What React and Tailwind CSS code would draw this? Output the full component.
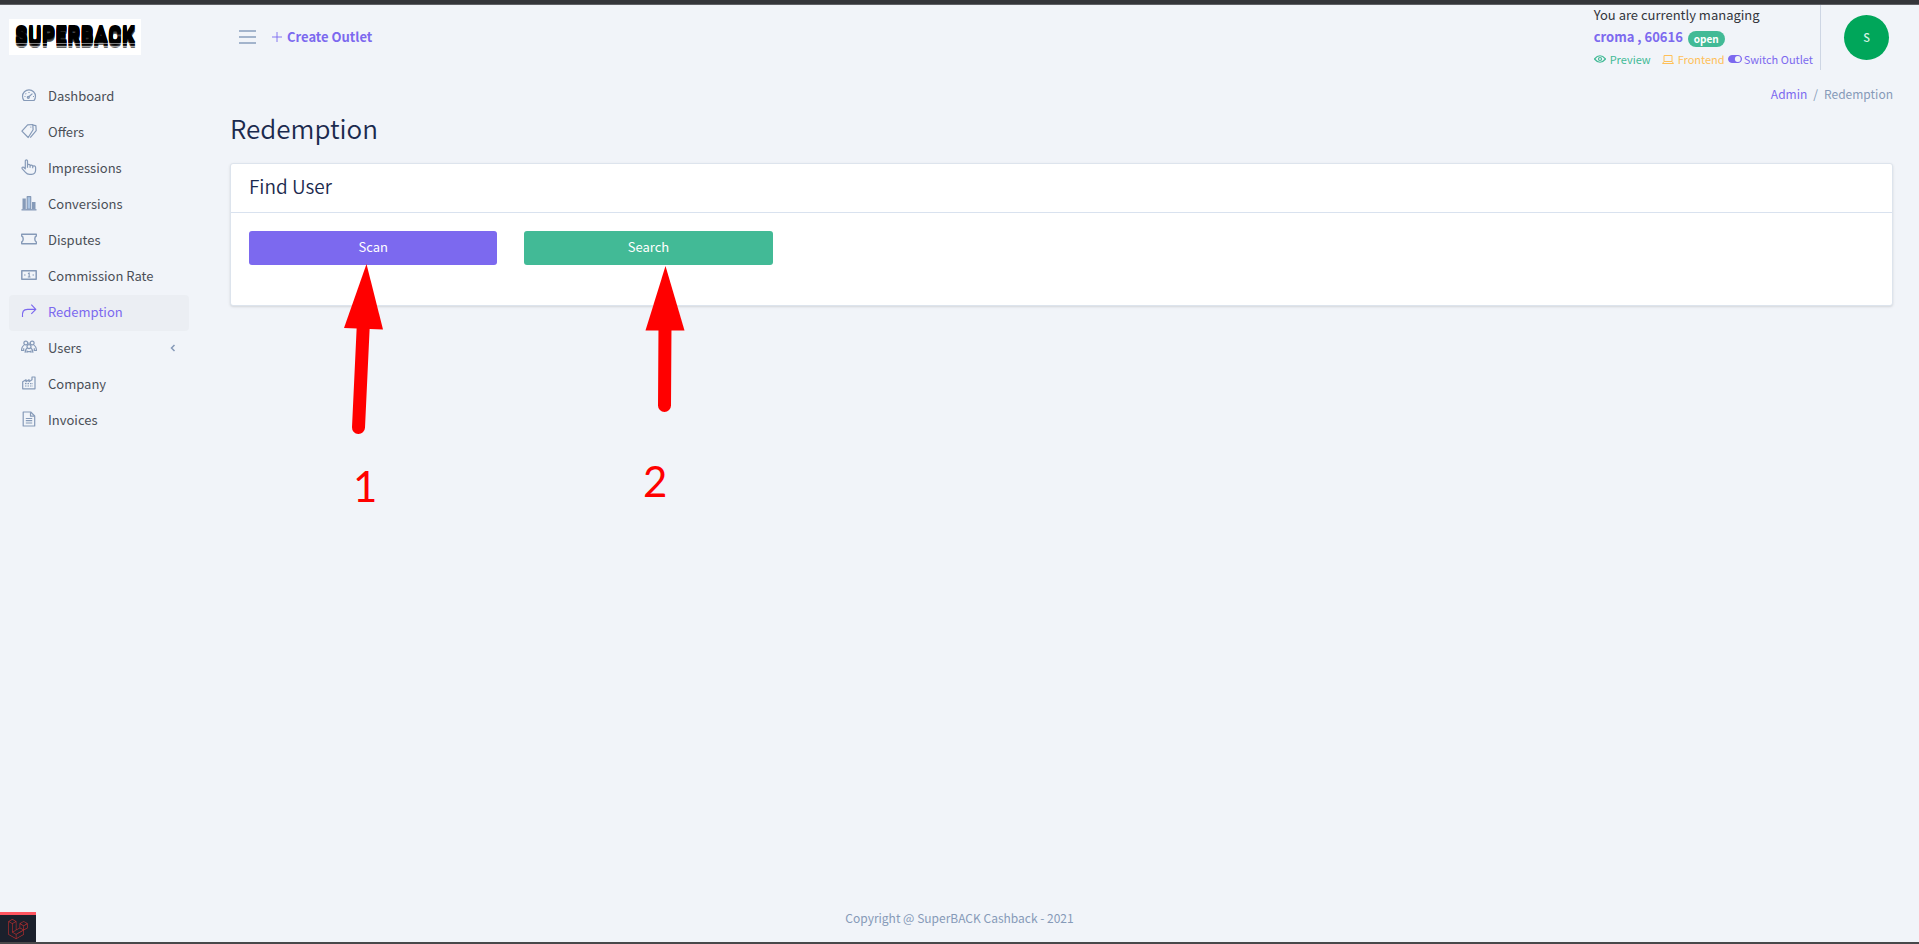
import React from "react";
import { FaLaravel } from "react-icons/fa";

function Icon({ children, className = "h-4 w-4" }) {
  return (
    <svg
      viewBox="0 0 16 16"
      className={className}
      fill="none"
      stroke="currentColor"
      strokeWidth="1.200"
      strokeLinejoin="round"
      aria-hidden="true"
    >
      {children}
    </svg>
  );
}

const icons = {
  dashboard: (
    <>
      <path d="M3 13.500C1.900 12.300 1.500 11 1.500 9.300a6.500 6.500 0 0 1 13 0c0 1.700-.4 3-1.500 4.200z" />
      <path d="M7.300 10.200L11.400 6.600" strokeWidth="1.200" />
      <circle cx="7.300" cy="10.300" r="1" />
      <path d="M3.500 9.500h1M4.500 6.500l.7.700M8 5v1M12 9.500h1" />
    </>
  ),
  tags: (
    <>
      <path d="M.9 8.200L6.600 1.900l5.200-.4.300 5.200L7.200 14.500z" />
      <path d="M12 2.200l2.900.4.300 5-6 7" />
      <path d="M9.400 4.200h.9" strokeWidth="1.300" />
    </>
  ),
  hand: (
    <path d="M4.300 9.800V2c0-1.500 2.200-1.500 2.200 0V6.200c.3-1.100 2.500-1.100 2.600.2v.4c.3-1 2.500-1 2.600.3v.5c.4-1 2.900-1 2.900.8v2.700c0 2.400-1.700 4.200-4 4.200H8.500c-1.700 0-3-.8-4-2L1.300 9.900C.5 8.800 1.500 7.500 2.700 8.300zM6.500 6.200v2.600M9.100 6.800v2M11.700 7.500v1.700" />
  ),
  bars: (
    <>
      <path d="M.5 14.800h15" strokeWidth="1.400" />
      <path d="M1.500 3.500h3.300V14H1.500zM11 7h3.500v7H11z" fill="currentColor" stroke="none" />
      <path d="M6.200 1.700h3.500V14H6.200z" fill="#a9c3e2" />
    </>
  ),
  ticket: (
    <path d="M.7 3.200h14.600V5c-2 .8-2 5.200 0 6v1.800H.7V11c2-.8 2-5.200 0-6z" strokeWidth="1.400" />
  ),
  money: (
    <>
      <path d="M.8 3.700h14.400v8.600H.8z" strokeWidth="1.500" />
      <path d="M7 6.800l1.200-.9V10M6.800 10h2.700M3 8h1.600M11.500 8H13" strokeWidth="1.100" />
    </>
  ),
  share: <path d="M1.500 14c-.4-5.500.8-7.700 5-7.700H14.500M10.300 1.700l4.500 4.600-4.500 4.600" strokeWidth="1.200" />,
  users: (
    <>
      <circle cx="4.800" cy="4" r="1.900" />
      <circle cx="11.200" cy="4" r="1.900" />
      <circle cx="8" cy="7.600" r="2" />
      <path d="M3.200 6.200C1.200 7 .7 8.800.5 11.500h2.800M12.800 6.200c2 .8 2.500 2.600 2.700 5.300h-2.800M6.300 9c-1.500.7-2 2-2.200 4.700M9.700 9c1.500.7 2 2 2.200 4.700M6 13.700V11.500M10 13.700V11.500M6.500 12.700h3M2.700 11V9.200M13.300 11V9.200M8 3.500v1.500" />
    </>
  ),
  factory: (
    <>
      <path d="M1.700 13.800V6.800L5 4.700v2l3-2v2l3-2V2h3v11.800z" />
      <path d="M4 8.700h8M4 11h8" strokeDasharray="1.500 1" />
    </>
  ),
  file: (
    <>
      <path d="M2.200 1h7.500l4 4v10H2.200z" />
      <path d="M9.500 1.200v4h4M4.800 7.500h6.400M4.800 9.700h6.400M4.800 12h6.400" />
    </>
  ),
};

const menu = [
  { label: "Dashboard", icon: "dashboard" },
  { label: "Offers", icon: "tags" },
  { label: "Impressions", icon: "hand" },
  { label: "Conversions", icon: "bars" },
  { label: "Disputes", icon: "ticket" },
  { label: "Commission Rate", icon: "money" },
  { label: "Redemption", icon: "share", active: true },
  { label: "Users", icon: "users", expandable: true },
  { label: "Company", icon: "factory" },
  { label: "Invoices", icon: "file" },
];

function Logo() {
  return (
    <a
      href="#home"
      className="relative ml-[9px] mt-3.5 flex h-9 w-[132px] items-start justify-center bg-white"
    >
      <span className="pt-[3px] font-['Roboto_Condensed','Roboto',sans-serif] text-[24px]/[24px] font-bold text-black [text-shadow:0_1px_black,0_2px_black,0_3px_black,0_4px_#222,0_5px_#444,0_6px_#666]">
        SUPERBACK
      </span>
      <span className="absolute inset-x-1 bottom-1 h-2.5 bg-[repeating-linear-gradient(to_bottom,transparent_0_2px,rgba(255,255,255,0.5)_2px_3px)]" />
    </a>
  );
}

function Sidebar() {
  return (
    <aside className="w-[198px] shrink-0">
      <Logo />
      <nav className="mt-6 px-[9px]">
        <ul>
          {menu.map((item) => (
            <li key={item.label}>
              <a
                href={"#" + item.label.toLowerCase().replace(" ", "-")}
                className={
                  "flex h-9 items-center gap-[11px] rounded px-3 pb-0.5 text-[13px]/5 " +
                  (item.active ? "bg-[#ebeef3] text-[#7c69ef]" : "text-[#4a4f57]")
                }
              >
                <span className={"pb-0.5 " + (item.active ? "" : "text-[#869ab8]")}>
                  <Icon className="h-4 w-4">{icons[item.icon]}</Icon>
                </span>
                {item.label}
                {item.expandable && (
                  <svg viewBox="0 0 8 8" className="ml-auto h-2 w-2 text-[#869ab8]" fill="none" stroke="currentColor" strokeWidth="1.500">
                    <path d="M5.500 1L2.500 4l3 3" />
                  </svg>
                )}
              </a>
            </li>
          ))}
        </ul>
      </nav>
    </aside>
  );
}

function Header() {
  return (
    <header className="flex h-[65px] items-start">
      <div className="flex h-16 items-center pl-[41px]">
        <button type="button" aria-label="Toggle menu" className="flex w-[17px] flex-col gap-1">
          <span className="h-0.5 bg-[#a3b4cc]" />
          <span className="h-0.5 bg-[#a3b4cc]" />
          <span className="h-0.5 bg-[#a3b4cc]" />
        </button>
        <a href="#create" className="ml-4 flex items-center gap-[5px] text-[13px]/5 font-bold text-[#7c69ef]">
          <svg viewBox="0 0 10 10" className="h-2.5 w-2.5" stroke="currentColor" strokeWidth="0.900">
            <path d="M5 0v10M0 5h10" />
          </svg>
          Create Outlet
        </a>
      </div>
      <div className="ml-auto h-[65px] border-r border-[#ced6e4] pr-[7px] text-[13px]/5">
        <p className="text-[#33363c]">You are currently managing</p>
        <p className="flex h-6 items-center font-bold text-[#7c69ef]">
          croma , 60616
          <span className="ml-[5px] mt-1 h-4 rounded-full bg-[#42ba96] px-1.5 text-[10px]/[15px] text-white">open</span>
        </p>
        <p className="flex items-center text-[11px]/5">
          <a href="#preview" className="flex items-center gap-1 text-[#42ba96]">
            <svg viewBox="0 0 12 8" className="h-2 w-3" fill="none" stroke="currentColor" strokeWidth="1.200">
              <path d="M.5 4Q6-2.500 11.500 4 6 10.500.5 4z" />
              <circle cx="6" cy="4" r="1.500" />
            </svg>
            Preview
          </a>
          <a href="#frontend" className="ml-[11px] flex items-center gap-1 text-[#ffc058]">
            <svg viewBox="0 0 12 9" className="h-[9px] w-3" fill="none" stroke="currentColor">
              <path d="M2 .5h8v6H2zM.5 8.500h11l-1.500-2H2z" />
            </svg>
            Frontend
          </a>
          <a href="#switch" className="ml-[3px] flex items-center gap-0.5 text-[#7c69ef]">
            <svg viewBox="0 0 14 8" className="h-2 w-3.5">
              <rect x=".5" y=".5" width="13" height="7" rx="3.500" fill="currentColor" stroke="currentColor" />
              <circle cx="9.800" cy="4" r="2.900" fill="#f1f4f9" />
            </svg>
            Switch Outlet
          </a>
        </p>
      </div>
      <button
        type="button"
        className="ml-[23px] mr-[30px] mt-[10px] h-[45px] w-[45px] rounded-full bg-[#00a65a] text-[11px] font-medium text-[#d5f2e2]"
      >
        S
      </button>
    </header>
  );
}

function Annotations() {
  return (
    <div className="pointer-events-none absolute left-0 top-0 font-['Lato',sans-serif] text-[42px]/[42px] text-[#ff0000]">
      <svg width="720" height="460" viewBox="0 0 720 460" fill="#ff0000" stroke="none" aria-hidden="true">
        <path d="M366.500 264L383 329.500 344 328z" />
        <path d="M363.300 325L358.500 427.500" stroke="#ff0000" strokeWidth="13" strokeLinecap="round" />
        <path d="M665.500 266L684.500 330.500h-39z" />
        <path d="M665 325L664.500 405.500" stroke="#ff0000" strokeWidth="13" strokeLinecap="round" />
      </svg>
      <span className="absolute left-[353px] top-[465px]">1</span>
      <span className="absolute left-[643px] top-[460px]">2</span>
    </div>
  );
}

export default function App() {
  return (
    <div className="relative flex min-h-screen flex-col bg-[#f1f4f9] font-['Noto_Sans_CJK_SC',sans-serif]">
      <div className="h-[5px] border-b border-[#5f6065] bg-[#35363a]" />
      <div className="flex grow">
        <Sidebar />
        <div className="min-w-0 grow">
          <Header />
          <main className="pl-8 pr-[26px]">
            <nav aria-label="Breadcrumb" className="mt-4 flex justify-end gap-[6px] text-[12px]/4 text-[#869ab8]">
              <a href="#admin" className="text-[#7c69ef]">Admin</a>
              <span>/</span>
              <span>Redemption</span>
            </nav>
            <h1 className="mt-2 text-[26px]/9 font-[350] text-[#1b2a4e]">Redemption</h1>
            <section className="mt-[17px] rounded-[3px] border border-[#dde4ed] bg-white shadow-sm">
              <h2 className="border-b border-[#d9e2ef] px-[18px] pb-[13px] pt-[9px] text-[19px]/[26px] font-[350] text-[#1b2a4e]">
                Find User
              </h2>
              <div className="grid grid-cols-6 gap-[27px] px-[18px] pb-10 pt-[18px]">
                <button type="button" className="h-[34px] rounded-[3px] bg-[#7c69ef] pb-0.5 text-[13px]/5 text-white">
                  Scan
                </button>
                <button type="button" className="h-[34px] rounded-[3px] bg-[#42ba96] pb-0.5 text-[13px]/5 text-white">
                  Search
                </button>
              </div>
            </section>
          </main>
        </div>
      </div>
      <footer className="pb-4 text-center text-[12px]/4 text-[#869ab8]">Copyright @ SuperBACK Cashback - 2021</footer>
      <div className="h-0.5 bg-[#48484a]" />
      <button
        type="button"
        aria-label="Debug bar"
        className="absolute bottom-0.5 left-0 flex h-[30px] w-9 items-center justify-center border-t-[3px] border-[#ff5560] bg-[#1b202c] text-[#b92e2e]"
      >
        <FaLaravel className="h-5 w-5" />
      </button>
      <Annotations />
    </div>
  );
}
